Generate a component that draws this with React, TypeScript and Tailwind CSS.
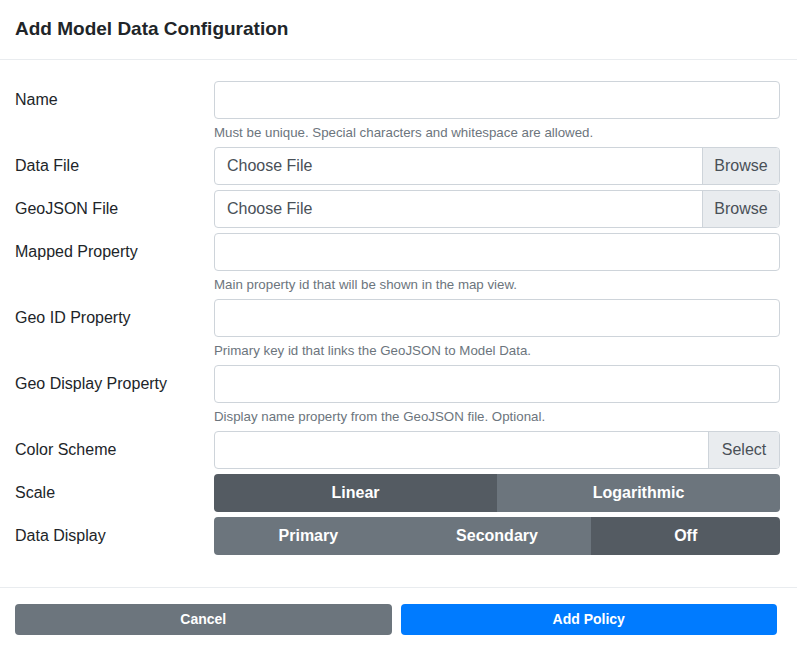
import React, { useState } from "react";

const font = { fontFamily: '"Liberation Sans", Arial, sans-serif' };

function Row({ label, help, children }: { label: string; help?: string; children: React.ReactNode }) {
  return (
    <div className="flex mb-[5px]">
      <div className="w-[199px] shrink-0 h-[38px] flex items-center text-[16px] text-[#212529]">{label}</div>
      <div className="flex-1">
        {children}
        {help && <div className="mt-1 text-[13.3px] leading-[19px] text-[#6c757d]">{help}</div>}
      </div>
    </div>
  );
}

function TextInput() {
  return <input type="text" className="w-full h-[38px] px-3 border border-[#ced4da] rounded-[4px] bg-white text-[16px] outline-none" />;
}

function AddonInput({ text, addon, addonW }: { text?: string; addon: string; addonW: string }) {
  return (
    <div className="flex h-[38px] border border-[#ced4da] rounded-[4px] overflow-hidden bg-white">
      <div className="flex-1 flex items-center px-3 text-[16px] text-[#495057]">{text}</div>
      <div className={`${addonW} flex items-center justify-center bg-[#e9ecef] border-l border-[#ced4da] text-[16px] text-[#495057]`}>{addon}</div>
    </div>
  );
}

function Toggle({ options, value, onChange }: { options: string[]; value: string; onChange: (v: string) => void }) {
  return (
    <div className="flex h-[38px] rounded-[4px] overflow-hidden">
      {options.map((o) => (
        <button
          key={o}
          onClick={() => onChange(o)}
          className={`flex-1 text-white font-bold text-[16px] ${value === o ? "bg-[#545b62]" : "bg-[#6c757d]"}`}
        >
          {o}
        </button>
      ))}
    </div>
  );
}

export default function App() {
  const [scale, setScale] = useState("Linear");
  const [display, setDisplay] = useState("Off");

  return (
    <div className="w-[797px] h-[651px] bg-white flex flex-col" style={font}>
      {/* header */}
      <div className="h-[60px] shrink-0 px-[15px] flex items-center border-b border-[#e9ecef]">
        <h5 className="text-[19px] font-bold text-[#212529]">Add Model Data Configuration</h5>
      </div>

      {/* body */}
      <div className="flex-1 pt-[21px] pl-[15px] pr-[17px]">
        <Row label="Name" help="Must be unique. Special characters and whitespace are allowed.">
          <TextInput />
        </Row>
        <Row label="Data File">
          <AddonInput text="Choose File" addon="Browse" addonW="w-[77px]" />
        </Row>
        <Row label="GeoJSON File">
          <AddonInput text="Choose File" addon="Browse" addonW="w-[77px]" />
        </Row>
        <Row label="Mapped Property" help="Main property id that will be shown in the map view.">
          <TextInput />
        </Row>
        <Row label="Geo ID Property" help="Primary key id that links the GeoJSON to Model Data.">
          <TextInput />
        </Row>
        <Row label="Geo Display Property" help="Display name property from the GeoJSON file. Optional.">
          <TextInput />
        </Row>
        <Row label="Color Scheme">
          <AddonInput addon="Select" addonW="w-[71px]" />
        </Row>
        <Row label="Scale">
          <Toggle options={["Linear", "Logarithmic"]} value={scale} onChange={setScale} />
        </Row>
        <Row label="Data Display">
          <Toggle options={["Primary", "Secondary", "Off"]} value={display} onChange={setDisplay} />
        </Row>
      </div>

      {/* footer */}
      <div className="h-[64px] shrink-0 border-t border-[#e9ecef] flex items-center gap-[9px] pl-[15px] pr-[20px]">
        <button className="flex-1 h-[31px] rounded-[4px] bg-[#6c757d] text-white font-bold text-[14px]">Cancel</button>
        <button className="flex-1 h-[31px] rounded-[4px] bg-[#007bff] text-white font-bold text-[14px]">Add Policy</button>
      </div>
    </div>
  );
}
